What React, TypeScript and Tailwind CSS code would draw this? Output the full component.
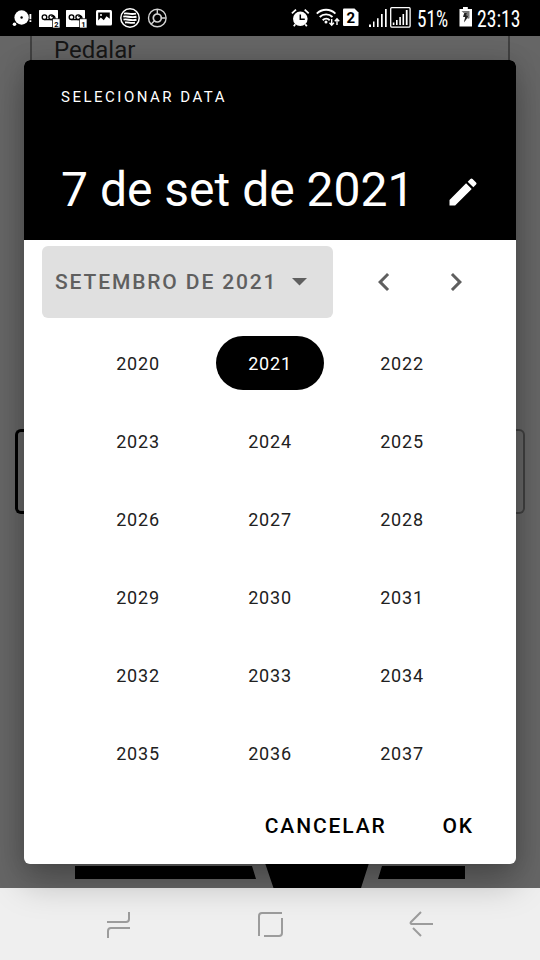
import React from "react";

function Voicemail({ n }: { n: string }) {
  return (
    <svg width="21" height="18" viewBox="0 0 21 18">
      <rect width="19" height="17" rx="0.5" fill="#fff" />
      <g fill="none" stroke="#000" strokeWidth="1.4">
        <circle cx="5.5" cy="7.2" r="2.3" />
        <circle cx="12.2" cy="7.2" r="2.3" />
        <path d="M5.5 9.6h10.4V7.6a2 2 0 0 0-3.5-1" />
      </g>
      <rect x="13.6" y="8.8" width="7.4" height="9.2" fill="#fff" stroke="#000" strokeWidth="0.7" />
      <text x="17.3" y="16.6" textAnchor="middle" fontSize="7.5" fontWeight="700" fontFamily="Roboto, sans-serif">{n}</text>
    </svg>
  );
}

function StatusBar() {
  return (
    <header className="flex h-9 shrink-0 items-start bg-black pl-3 text-white">
      <svg className="mt-2 w-5 shrink-0" height="20" viewBox="0 0 20 20" fill="#fff">
        <circle cx="9.6" cy="9.5" r="7.2" />
        <circle cx="9.6" cy="9.5" r="1.2" fill="#000" />
        <circle cx="2.5" cy="16.3" r="1.8" />
        <path d="M17.5 6h1.8v5.2h-1.8zM17.5 12.3h1.8v1.8h-1.8z" />
      </svg>
      <div className="ml-[7px] mt-2.5 flex gap-1.5">
        <Voicemail n="2" />
        <Voicemail n="1" />
      </div>
      <svg className="ml-[9px] mt-2.5 shrink-0" width="16" height="16" viewBox="0 0 16 16">
        <rect width="16" height="15.5" rx="1.5" fill="#fff" />
        <path d="M2.2 2.5h11.6v6.2l-3.3-2.5-2.7 4-3-2.6-2.6 2.8z" fill="#000" />
        <circle cx="5" cy="5" r="1" fill="#fff" />
      </svg>
      <svg className="ml-2 mt-2 shrink-0" width="20" height="20" viewBox="0 0 20 20" fill="none" stroke="#fff">
        <circle cx="10" cy="10" r="9.2" strokeWidth="1.5" />
        <path d="M4 5.6c4-1 5.5 1.3 12 0M3.3 8.6c4-1 6.5 1.5 13.2.2M3.5 11.6c4-1 6.5 1.5 13 .2M5 14.5c3.5-.7 5.5 1.2 10 .1" strokeWidth="1.9" />
      </svg>
      <svg className="ml-[7px] mt-2 shrink-0" width="20" height="20" viewBox="0 0 20 20" fill="none" stroke="#d2d2d2" strokeWidth="1.4">
        <circle cx="10.3" cy="10" r="8.8" />
        <circle cx="10.3" cy="10" r="4" strokeWidth="1.7" />
        <path d="M10.3 1.2v5M14.3 10h4.5M7.5 12.8L4 16.2" />
      </svg>
      <svg className="ml-[124px] mt-2 shrink-0" width="19" height="20" viewBox="0 0 19 20">
        <circle cx="9.3" cy="10.8" r="7.3" fill="#fff" />
        <path d="M.9 5.4L5 1.7M13.7 1.7l4 3.7M4.3 16.2l-1.5 2M14.3 16.2l1.5 2" stroke="#fff" strokeWidth="1.8" />
        <path d="M9.3 6.5v4.8h4.5" stroke="#000" fill="none" strokeWidth="1.5" />
      </svg>
      <svg className="ml-1.5 mt-2 shrink-0" width="24" height="19" viewBox="0 0 24 19" fill="none" stroke="#fff">
        <path d="M.8 5.6a13.3 13.3 0 0 1 18.6 0M3.7 9a9.2 9.2 0 0 1 12.8 0M6.7 12.2a5 5 0 0 1 7 0" strokeWidth="1.9" />
        <circle cx="10" cy="14" r="1.5" fill="#fff" stroke="none" />
        <path d="M15.7 11v6M13.5 14.8l2.2 2.4 2.2-2.4M21 17v-6M18.8 13.2L21 10.8l2.2 2.4" strokeWidth="1.4" />
      </svg>
      <svg className="ml-[3px] mt-2 shrink-0" width="16" height="19" viewBox="0 0 16 19">
        <path d="M1 .5h10.5l4 4v12.6q0 .9-1 .9H1q-1 0-1-1V1.5q0-1 1-1z" fill="#fff" />
        <text x="7.8" y="14.6" textAnchor="middle" fontSize="15" fontWeight="700" fontFamily="Roboto, sans-serif">2</text>
      </svg>
      <svg className="ml-2.5 mt-[9px] shrink-0" width="18" height="18" viewBox="0 0 18 18" fill="#fff">
        <path d="M0 15.5h2V18H0zM4 12.5h1.5V18H4zM8 9.3h1.6V18H8zM12 5h1.7v13H12zM16 0h1.7v18H16z" />
      </svg>
      <svg className="ml-[3px] mt-[7px] shrink-0" width="21" height="21" viewBox="0 0 21 21">
        <rect x=".7" y=".7" width="19.4" height="19.4" rx="1" fill="none" stroke="#fff" strokeWidth="1.3" />
        <path d="M2.8 15.5h1.6V18H2.8zM6 13h1.6v5H6zM9.3 10h1.6v8H9.3zM12.5 7h1.6v11h-1.6zM15.8 3h1.8v15h-1.8z" fill="#fff" />
      </svg>
      <div className="ml-[6px] mt-[5px] w-[42px] shrink-0 whitespace-nowrap font-['Roboto_Condensed',Roboto,sans-serif] text-2xl leading-7">
        <span className="inline-block origin-left scale-x-[0.8]">51%</span>
      </div>
      <svg className="mt-[7px] shrink-0" width="13" height="20" viewBox="0 0 13 20">
        <path d="M4 0h4.8v2H13v17.5H.5V2H4z" fill="#fff" />
        <path d="M2.5 4h8v7.2L8.5 12l1-3.4H7.1L8 5.2H5.4L4.2 10h2.2L5.2 15l4-5" fill="#777" />
        <path d="M5.4 5.4h2.7L7.3 8.5h2.4L5 15.5 6.2 10H4.2z" fill="#222" />
      </svg>
      <div className="ml-[5px] mt-[5px] w-[54px] shrink-0 whitespace-nowrap font-['Roboto_Condensed',Roboto,sans-serif] text-2xl leading-7">
        <span className="inline-block origin-left scale-x-[0.82]">23:13</span>
      </div>
    </header>
  );
}

/* Form screen dimmed behind the dialog */
function DimmedForm() {
  return (
    <main className="flex h-[852px] shrink-0 flex-col overflow-hidden bg-[#666]">
      <div className="mx-[30px] h-10 border-x-2 border-[#414141] pl-[22px] text-2xl leading-7 text-[#171717]">Pedalar</div>
      <div className="mt-[353px] flex h-[85px]">
        <div className="ml-[15px] w-1/3 rounded-l-md border-[3px] border-r-0 border-black" />
        <div className="ml-auto mr-[15px] w-1/3 rounded-r-md border-2 border-l-0 border-[#414141]" />
      </div>
      <svg className="mt-auto shrink-0" width="540" height="25" viewBox="0 0 540 25">
        <path d="M75 3h177l4 13H75zM265 0h104l-8 25h-87.5zM382 3h83v13h-87z" />
      </svg>
    </main>
  );
}

function NavBar() {
  return (
    <nav className="flex h-[72px] shrink-0 items-center justify-between bg-[#efefef] px-[105px]">
      <svg width="26" height="28" viewBox="0 0 26 28" fill="none" stroke="#9c9c9c" strokeWidth="2">
        <path d="M2 12h19q3 0 3-3V2M25 18H6q-3 0-3 3v7" />
      </svg>
      <svg width="26" height="26" viewBox="0 0 26 26" fill="none" stroke="#9c9c9c" strokeWidth="2">
        <path d="M2 25V5q0-3 3-3h20M25 7v15q0 3-3 3H7" />
      </svg>
      <svg width="26" height="28" viewBox="0 0 26 28" fill="none" stroke="#9c9c9c" strokeWidth="2">
        <path d="M12 2L1.8 12.2q-.8 1.3.8 1.8H24M4 18l8 8" />
      </svg>
    </nav>
  );
}

const YEARS = Array.from({ length: 18 }, (_, i) => 2020 + i);

function DatePicker() {
  return (
    <section className="absolute left-6 top-[60px] flex h-[804px] w-[492px] flex-col overflow-hidden rounded-md bg-white shadow-[0_18px_36px_rgba(0,0,0,0.26),0_0_22px_rgba(0,0,0,0.14)]">
      <div className="flex h-[180px] shrink-0 flex-col bg-black pl-[37px] text-white">
        <div className="mt-[27px] text-[15px] leading-5 tracking-[2.5px]">SELECIONAR DATA</div>
        <div className="mt-[51px] flex items-center justify-between pr-[35px]">
          <h1 className="whitespace-nowrap text-5xl leading-[64px]">7 de set de 2021</h1>
          <svg className="mt-1" width="36" height="36" viewBox="0 0 24 24" fill="#fff">
            <path d="M3 17.25V21h3.75L17.81 9.94l-3.75-3.75L3 17.25zM20.71 7.04a1 1 0 0 0 0-1.41l-2.34-2.34a1 1 0 0 0-1.41 0l-1.83 1.83 3.75 3.75 1.83-1.83z" />
          </svg>
        </div>
      </div>
      <div className="mt-1.5 flex h-[72px] shrink-0 items-center pl-[18px] text-[#5f5f5f]">
        <button className="flex h-full w-[291px] items-center rounded-md bg-[#e0e0e0] pl-[13px] text-[21px] font-medium tracking-[1.87px]">
          <span className="mt-0.5 whitespace-nowrap">SETEMBRO DE 2021</span>
          <svg className="ml-[15px]" width="16" height="8" viewBox="0 0 16 8" fill="currentColor"><path d="M0 0h15L7.5 7.5z" /></svg>
        </button>
        <svg className="ml-[33px]" width="36" height="36" viewBox="0 0 24 24" fill="currentColor"><path d="M15.41 7.41L14 6l-6 6 6 6 1.41-1.41L10.83 12z" /></svg>
        <svg className="ml-9" width="36" height="36" viewBox="0 0 24 24" fill="currentColor"><path d="M8.59 16.59L13.17 12 8.59 7.41 10 6l6 6-6 6z" /></svg>
      </div>
      <div className="mx-12 mt-[18px] grid grid-cols-3 gap-y-6">
        {YEARS.map((year) => (
          <button
            key={year}
            className={
              year === 2021
                ? "mx-auto h-[54px] w-[108px] rounded-full bg-black pt-0.5 text-lg tracking-[0.8px] text-white"
                : "mx-auto h-[54px] w-[108px] pt-0.5 text-lg tracking-[0.8px] text-[#212121]"
            }
          >
            {year}
          </button>
        ))}
      </div>
      <div className="mt-[31px] flex justify-end gap-14 pr-[42px] text-[21px] font-medium leading-[30px] tracking-[1.87px] text-black">
        <button>CANCELAR</button>
        <button>OK</button>
      </div>
    </section>
  );
}

export default function App() {
  return (
    <div className="relative flex h-[960px] w-[540px] flex-col overflow-hidden font-[Roboto,sans-serif]">
      <StatusBar />
      <DimmedForm />
      <NavBar />
      <DatePicker />
    </div>
  );
}
